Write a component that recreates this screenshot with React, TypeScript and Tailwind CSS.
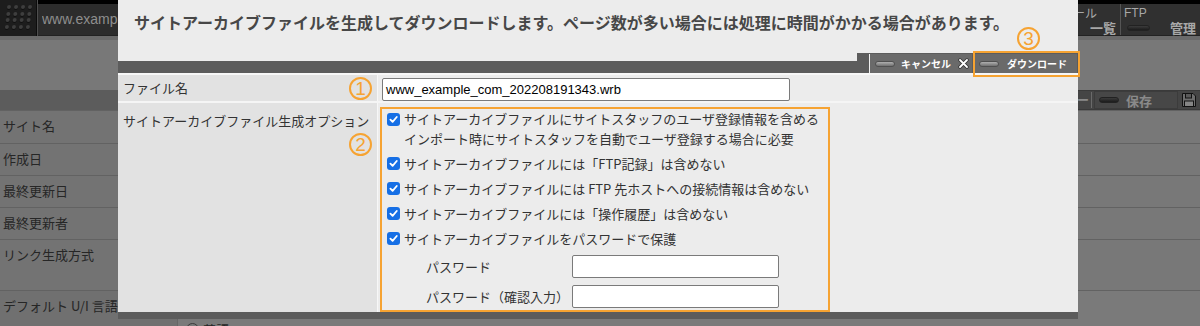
import React from "react";

const ORANGE = "#f6a332";

function Circ({ n }: { n: string }) {
  return (
    <span className="flex items-center justify-center w-[23px] h-[23px] rounded-full border-2 border-[#f6a332] text-[#f6a332] text-[19px] leading-none font-['Liberation_Sans',sans-serif]">
      {n}
    </span>
  );
}

function Check() {
  return (
    <span className="flex items-center justify-center w-[13px] h-[13px] rounded-[3px] bg-[#166fe5] shrink-0">
      <svg width="9" height="9" viewBox="0 0 10 10">
        <path d="M1.6 5.2 L4 7.6 L8.6 2.2" fill="none" stroke="#fff" strokeWidth="2" strokeLinecap="round" strokeLinejoin="round" />
      </svg>
    </span>
  );
}

function ModalPill() {
  return <span className="block w-[20px] h-[6px] rounded-full bg-linear-to-b from-[#b0b0b0] to-[#707070] border border-[#505050]" />;
}

function DarkPill({ w = 23 }: { w?: number }) {
  return (
    <span
      className="block h-[6px] rounded-full bg-linear-to-b from-[#3c3c3c] to-[#1c1c1c] border border-[#222]"
      style={{ width: w }}
    />
  );
}

function Background() {
  const rows: { label: string; h: string }[] = [
    { label: "サイト名", h: "h-[33px]" },
    { label: "作成日", h: "h-[32px]" },
    { label: "最終更新日", h: "h-[32px]" },
    { label: "最終更新者", h: "h-[32px]" },
    { label: "リンク生成方式", h: "h-[51px]" },
  ];
  return (
    <div className="flex flex-col">
      {/* header */}
      <div className="flex h-[36px]">
        <div className="w-[37px] h-[36px] bg-[#1d1d1d] border-r border-[#0c0c0c] flex items-start justify-center pt-[5px]">
          <div className="grid grid-cols-4 gap-x-[3px] gap-y-[2.5px] -skew-x-6">
            {Array.from({ length: 16 }).map((_, i) => (
              <span key={i} className="block w-[4px] h-[4px] rounded-full bg-[#3e3e3e] shadow-[0_1px_0_#111]" />
            ))}
          </div>
        </div>
        <div className="w-px bg-[#4e4e4e]" />
        <div className="flex-1 flex flex-col">
          <div className="h-[7px] bg-black" />
          <div className="flex-1 flex bg-[#2c2c2c] border-b border-[#222]">
            <div className="flex-1 pl-[4px] flex items-center">
              <span className="block w-[76px] overflow-hidden whitespace-nowrap text-[14px] text-[#8e8e8e] font-['Liberation_Sans',sans-serif]">
                www.example.com
              </span>
            </div>
            <div className="w-[47px] flex flex-col pt-[2px] pr-[4px] bg-[#303030]">
              <span className="text-[12px] leading-[14px] text-[#a8a8a8] overflow-hidden whitespace-nowrap">ール</span>
              <span className="text-[13px] leading-[14px] text-[#a8a8a8] font-bold text-right mt-[1px]">一覧</span>
            </div>
            <div className="w-px bg-[#555]" />
            <div className="w-[79px] flex flex-col pt-[2px] pl-[3px] pr-[4px] bg-[#303030]">
              <span className="text-[12px] leading-[14px] text-[#a8a8a8] font-['Liberation_Sans',sans-serif]">FTP</span>
              <div className="flex items-center justify-between mt-[1px]">
                <span className="ml-[3px]">
                  <DarkPill />
                </span>
                <span className="text-[13px] leading-[14px] text-[#a8a8a8] font-bold">管理</span>
              </div>
            </div>
          </div>
        </div>
      </div>
      <div className="h-[4px] bg-[#6a6a6a]" />
      <div className="h-[50px] bg-[#787878]" />
      {/* toolbar */}
      <div className="h-[20px] flex bg-[#5c5c5c]">
        <div className="flex-1" />
        <div className="w-[122px] flex items-stretch bg-[#454545] border-y border-[#3a3a3a]">
          <div className="w-[13px] flex items-center justify-end pr-[2px] text-[12px] text-[#8a8a8a] font-bold overflow-hidden whitespace-nowrap">ー</div>
          <div className="w-px bg-[#6a6a6a] my-[1px]" />
          <div className="w-[2px]" />
          <div className="w-[84px] flex items-center bg-[#474747] border border-[#3c3c3c]">
            <span className="ml-[4px]">
              <DarkPill w={20} />
            </span>
            <span className="ml-[7px] text-[13px] text-[#8a8a8a] font-bold leading-none">保存</span>
          </div>
          <div className="flex-1 flex items-center justify-center">
            <svg width="14" height="14" viewBox="0 0 14 14">
              <path d="M0.5 0.5 H11 L13.5 3 V13.5 H0.5 Z" fill="#6e6e6e" stroke="#121212" />
              <rect x="3.5" y="0.5" width="6" height="4.5" fill="#5a5a5a" stroke="#121212" />
              <rect x="2.5" y="8" width="9" height="5.5" fill="#858585" stroke="#121212" />
            </svg>
          </div>
        </div>
      </div>
      {/* rows */}
      {rows.map((r) => (
        <div key={r.label} className={`flex ${r.h} border-t border-[#626262] shadow-[inset_0_1px_0_#828282]`}>
          <div className="w-[177px] bg-[#737373] pl-[3px] pt-[5px] text-[13px] leading-[20px] text-[#262626]">{r.label}</div>
          <div className="flex-1 bg-[#787878]" />
        </div>
      ))}
      <div className="flex h-[60px] border-t border-[#626262] shadow-[inset_0_1px_0_#828282]">
        <div className="w-[177px] bg-[#707070] pl-[3px] pt-[5px] text-[13px] leading-[20px] text-[#262626]">
          デフォルト U/I 言語
        </div>
        <div className="flex-1 bg-[#7a7a7a] border-l border-[#666] pl-[8px] pt-[27px] flex flex-col">
          <div className="flex items-center gap-[4px] h-[23px]">
            <span className="block w-[13px] h-[13px] rounded-full border border-[#3a3a3a] bg-[#7a7a7a]" />
            <span className="text-[13px] text-[#262626]">英語</span>
          </div>
        </div>
      </div>
    </div>
  );
}

function Modal() {
  return (
    <div className="absolute left-[118px] top-0 w-[960px] h-[319px] flex flex-col bg-[#ececec]">
      <div className="h-[53px] pl-[16px] pt-[12px] text-[16px] leading-[20px] font-bold text-[#474747] whitespace-nowrap">
        サイトアーカイブファイルを生成してダウンロードします。ページ数が多い場合には処理に時間がかかる場合があります。
      </div>
      <div className="h-[22px] flex border-b-2 border-[#f7f7f7]">
        <div className="flex-1 self-end h-[12px] bg-[#5c5c5c]" />
        <div className="w-[221px] bg-[#5c5c5c] flex items-end pl-[12px] pr-[1px]">
          <div className="w-px h-[19px] bg-[#f0f0f0]" />
          <div className="w-[102px] h-[19px] bg-[#6a6a6a] flex items-center">
            <span className="ml-[5px]">
              <ModalPill />
            </span>
            <span className="ml-[6px] text-[10px] font-bold text-white leading-none">キャンセル</span>
            <span className="ml-auto mr-[3px]">
              <svg width="11" height="11" viewBox="0 0 11 11">
                <path d="M2 2 L9 9 M9 2 L2 9" stroke="#333" strokeWidth="3.4" strokeLinecap="round" />
                <path d="M2 2 L9 9 M9 2 L2 9" stroke="#fff" strokeWidth="1.8" strokeLinecap="round" />
              </svg>
            </span>
          </div>
          <div className="w-[3px]" />
          <div className="w-[102px] h-[19px] bg-[#6a6a6a] flex items-center">
            <span className="ml-[4px]">
              <ModalPill />
            </span>
            <span className="ml-[8px] text-[10px] font-bold text-white leading-none">ダウンロード</span>
          </div>
        </div>
      </div>

      {/* row 1 */}
      <div className="h-[26px] flex">
        <div className="relative w-[260px] bg-[#e2e2e2] border-r border-[#f7f7f7] flex items-center pl-[5px] text-[13px] text-[#333]">
          ファイル名
          <span className="absolute right-[5px] top-[2px]">
            <Circ n="1" />
          </span>
        </div>
        <div className="flex-1 pl-[4px] pt-[3px]">
          <div className="w-[408px] h-[23px] bg-white border border-[#7a7a7a] rounded-[2px] flex items-center pl-[3px] text-[13px] text-black font-['Liberation_Sans',sans-serif]">
            www_example_com_202208191343.wrb
          </div>
        </div>
      </div>
      <div className="h-[2px] flex">
        <div className="w-[260px] bg-[#f5f5f5]" />
        <div className="flex-1 bg-[#f5f5f5]" />
      </div>

      {/* row 2 */}
      <div className="h-[209px] flex">
        <div className="relative w-[260px] bg-[#e2e2e2] border-r border-[#f7f7f7] pl-[5px] pt-[8px] text-[13px] leading-[20px] text-[#333]">
          サイトアーカイブファイル生成オプション
          <span className="absolute right-[5px] top-[30px]">
            <Circ n="2" />
          </span>
        </div>
        <div className="flex-1 pl-[2px] pt-[4px]">
          <div className="w-[450px] h-[205px] border-2 border-[#f6a332] flex flex-col pl-[5px] text-[13px] text-[#333]">
            <div className="flex items-start gap-[4px]">
              <span className="mt-[3.5px]">
                <Check />
              </span>
              <div className="flex flex-col leading-[20px]">
                <span>サイトアーカイブファイルにサイトスタッフのユーザ登録情報を含める</span>
                <span>インポート時にサイトスタッフを自動でユーザ登録する場合に必要</span>
              </div>
            </div>
            {[
              "サイトアーカイブファイルには「FTP記録」は含めない",
              "サイトアーカイブファイルには FTP 先ホストへの接続情報は含めない",
              "サイトアーカイブファイルには「操作履歴」は含めない",
              "サイトアーカイブファイルをパスワードで保護",
            ].map((t) => (
              <div key={t} className="flex items-start gap-[4px] mt-[4px] leading-[21px]">
                <span className="mt-[4px]">
                  <Check />
                </span>
                <span>{t}</span>
              </div>
            ))}
            <div className="flex items-center ml-[39px] mt-[6px]">
              <span className="w-[146px]">パスワード</span>
              <div className="w-[207px] h-[23px] bg-white border border-[#7a7a7a] rounded-[2px]" />
            </div>
            <div className="flex items-center ml-[39px] mt-[7px]">
              <span className="w-[146px] whitespace-nowrap">パスワード（確認入力）</span>
              <div className="w-[207px] h-[23px] bg-white border border-[#7a7a7a] rounded-[2px]" />
            </div>
          </div>
        </div>
      </div>
      <div className="h-[7px] bg-[#5c5c5c]" />

      {/* annotations */}
      <span className="absolute left-[899px] top-[27px]">
        <Circ n="3" />
      </span>
      <div className="absolute left-[855px] top-[51px] w-[107px] h-[26px] border-2 border-[#f6a332]" style={{ borderColor: ORANGE }} />
    </div>
  );
}

export default function App() {
  return (
    <div className="relative w-[1200px] h-[326px] overflow-hidden bg-[#787878] font-['Noto_Sans_CJK_JP',sans-serif]">
      <Background />
      <Modal />
    </div>
  );
}
